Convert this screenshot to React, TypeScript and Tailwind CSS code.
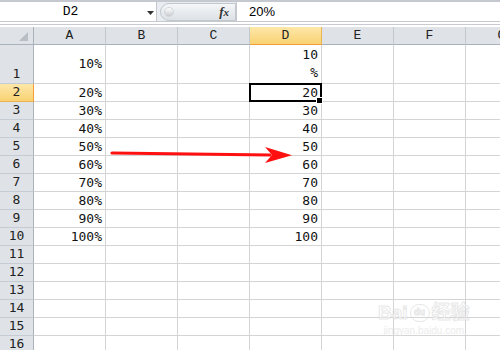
import React from 'react';

const columns = ['A', 'B', 'C', 'D', 'E', 'F', 'G'];

type Row = { n: number; a?: string; d?: string[]; tall?: boolean };

const rows: Row[] = [
  { n: 1, a: '10%', d: ['10', '%'], tall: true },
  { n: 2, a: '20%', d: ['20'] },
  { n: 3, a: '30%', d: ['30'] },
  { n: 4, a: '40%', d: ['40'] },
  { n: 5, a: '50%', d: ['50'] },
  { n: 6, a: '60%', d: ['60'] },
  { n: 7, a: '70%', d: ['70'] },
  { n: 8, a: '80%', d: ['80'] },
  { n: 9, a: '90%', d: ['90'] },
  { n: 10, a: '100%', d: ['100'] },
  { n: 11 },
  { n: 12 },
  { n: 13 },
  { n: 14 },
  { n: 15 },
  { n: 16 },
];

const cellFont = { fontFamily: '"DejaVu Sans Mono", "Liberation Mono", monospace' };
const headFont = { fontFamily: '"Liberation Mono", "DejaVu Sans Mono", monospace' };

const FormulaBar: React.FC = () => (
  <div className="h-[27px] bg-white">
    <div className="flex h-[22px] border-t-2 border-b border-[#c5c9cf] bg-[#e9ecf0]">
      {/* name box */}
      <div className="relative flex w-[157px] items-center bg-white border-r border-[#c5c9cf]">
        <span className="w-[141px] text-center text-[13px] text-black" style={headFont}>D2</span>
        <svg width="7" height="4" viewBox="0 0 7 4" className="absolute left-[147px] top-[9px]">
          <path d="M0 0 L7 0 L3.5 4 Z" fill="#333" />
        </svg>
      </div>
      {/* pill with round knob */}
      <div className="flex w-[79px] items-center pl-[3px]">
        <div className="flex h-[18px] flex-1 items-center rounded-l-full bg-gradient-to-b from-[#f4f6f8] to-[#dde1e6] border border-[#c3c8ce]">
          <div className="ml-[3px] h-[10px] w-[10px] rounded-full bg-gradient-to-b from-[#ffffff] to-[#c8ccd1] border border-[#d2d5d9]" />
          <span
            className="ml-auto mr-[6px] text-[13px] italic font-bold text-[#333]"
            style={{ fontFamily: '"Liberation Serif", serif' }}
          >
            f<span className="text-[11px]">x</span>
          </span>
        </div>
      </div>
      <div className="flex flex-1 items-center bg-white border-l border-[#c5c9cf] pl-[12px]">
        <span className="text-[13px] text-black" style={{ fontFamily: '"Liberation Sans", sans-serif' }}>20%</span>
      </div>
    </div>
    <div className="mt-[2px] h-px bg-[#c8ccd2]" />
  </div>
);

const HeaderRow: React.FC = () => (
  <div className="flex h-[18px]">
    <div className="relative w-[34px] shrink-0 bg-[#dfe3e8] border-r border-b border-[#a9b1bb]">
      <svg width="9" height="9" viewBox="0 0 9 9" className="absolute right-[5px] bottom-[3px]">
        <path d="M9 0 L9 9 L0 9 Z" fill="#b8bec6" />
      </svg>
    </div>
    {columns.map((c) => (
      <div
        key={c}
        className={
          c === 'D'
            ? 'flex w-[72px] shrink-0 items-center justify-center bg-gradient-to-b from-[#fde7a8] to-[#f9d272] border-r border-[#e9b550] border-b border-b-[#f29d38] text-[13px] text-[#222]'
            : 'flex w-[72px] shrink-0 items-center justify-center bg-[#dfe3e8] border-r border-[#c2c8cf] border-b border-b-[#a9b1bb] text-[13px] text-[#222]'
        }
        style={headFont}
      >
        {c}
      </div>
    ))}
  </div>
);

const SheetRow: React.FC<{ row: Row }> = ({ row }) => {
  const selected = row.n === 2;
  const h = row.tall ? 'h-[39px]' : 'h-[18px]';
  return (
    <div className={`flex ${h}`}>
      <div
        className={
          selected
            ? 'flex w-[34px] shrink-0 items-end justify-center pb-[1px] bg-gradient-to-b from-[#fde7a8] to-[#f9d272] border-r border-r-[#f29d38] border-b border-b-[#e9b550] text-[13px] leading-[16px] text-[#222]'
            : 'flex w-[34px] shrink-0 items-end justify-center pb-[1px] bg-[#dfe3e8] border-r border-r-[#a9b1bb] border-b border-b-[#c6ccd3] text-[13px] leading-[16px] text-[#222]'
        }
        style={cellFont}
      >
        {row.n}
      </div>
      {columns.map((c) => {
        const lines = c === 'A' && row.a ? [row.a] : c === 'D' && row.d ? row.d : [];
        return (
          <div
            key={c}
            className="relative flex w-[72px] shrink-0 flex-col items-end justify-center pr-[3px] border-r border-b border-[#d4d4d4] text-[13px] leading-[18px] text-[#111]"
            style={cellFont}
          >
            {lines.map((l) => (
              <span key={l}>{l}</span>
            ))}
            {selected && c === 'D' && (
              <>
                <div className="absolute z-10 -left-[1px] -top-[1px] h-[19px] w-[73px] border-2 border-black" />
                <div className="absolute z-20 -right-[2px] -bottom-[3px] h-[7px] w-[7px] bg-black border border-white" />
              </>
            )}
          </div>
        );
      })}
    </div>
  );
};

const App: React.FC = () => {
  return (
    <div className="relative h-[350px] w-[500px] overflow-hidden bg-white">
      <FormulaBar />
      <HeaderRow />
      {rows.map((r) => (
        <SheetRow key={r.n} row={r} />
      ))}

      {/* red arrow annotation */}
      <svg width="500" height="350" className="pointer-events-none absolute left-0 top-0 z-30">
        <path d="M112 153 L270 155" stroke="#ff1010" strokeWidth="3.2" strokeLinecap="round" />
        <path d="M265 147 L292 155.3 L265 163 L272 155 Z" fill="#ff1010" />
      </svg>

      {/* watermark */}
      <div className="pointer-events-none absolute z-30 left-[378px] top-[303px] flex flex-col items-center opacity-60">
        <div className="flex items-center gap-[2px] text-[19px] font-bold leading-none text-white" style={{ fontFamily: '"Liberation Sans", "Noto Sans CJK SC", sans-serif', WebkitTextStroke: '1px #d9d9d9' }}>
          <span>Bai</span>
          <span className="flex h-[18px] w-[20px] items-center justify-center rounded-full border border-[#d9d9d9] text-[9px]">du</span>
          <span>经验</span>
        </div>
        <span className="mt-[4px] text-[10px] leading-none text-[#e0e0e0]" style={{ fontFamily: '"Liberation Sans", sans-serif' }}>jingyan.baidu.com</span>
      </div>
    </div>
  );
};

export default App;
